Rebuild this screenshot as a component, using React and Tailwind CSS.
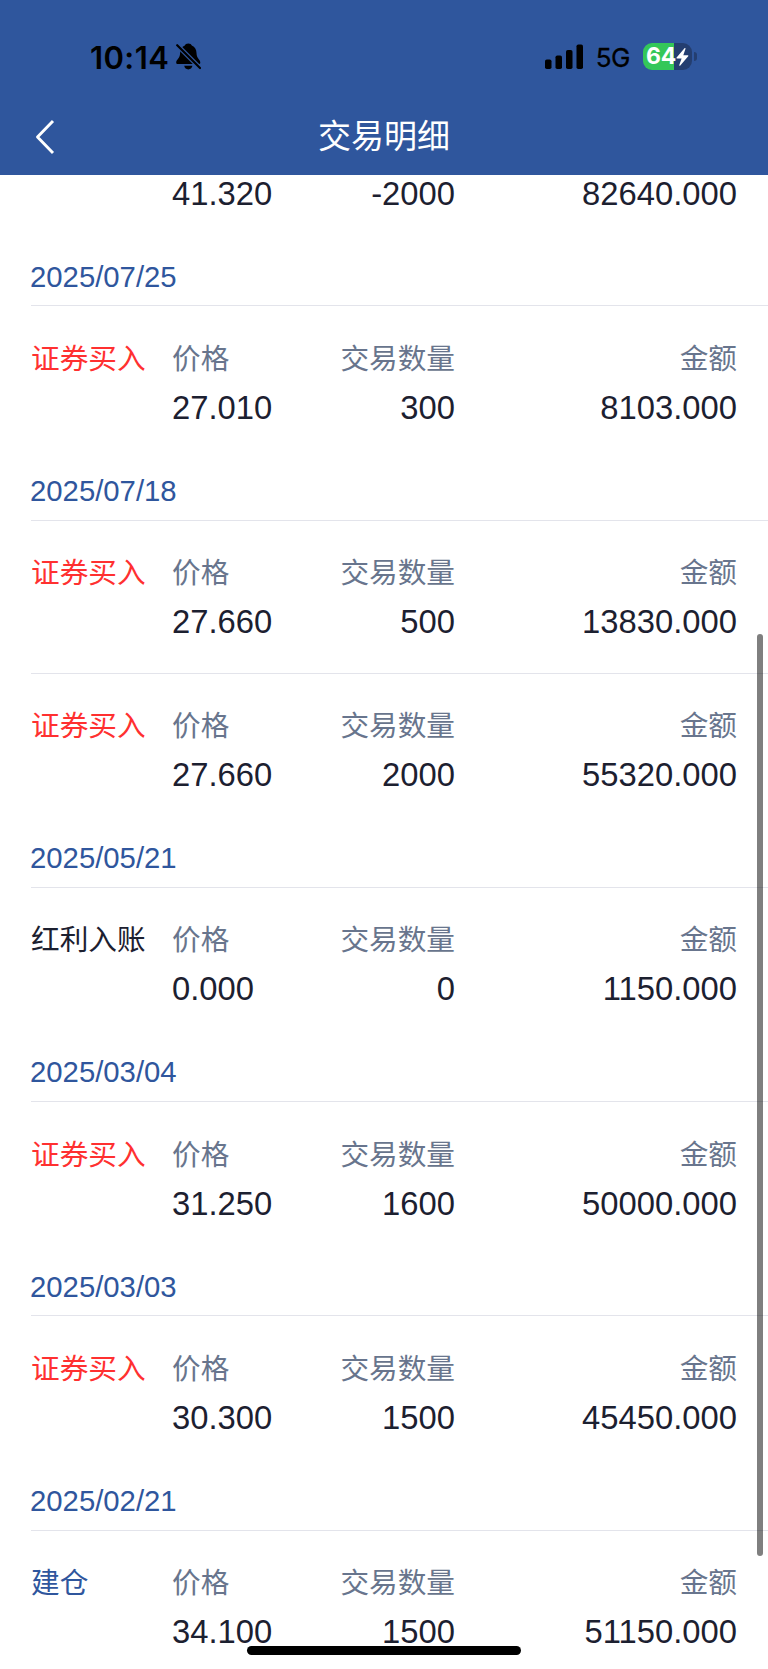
const groups = [
  {
    date: "2025/07/25",
    rows: [{ type: "证券买入", price: "27.010", quantity: "300", amount: "8103.000" }],
  },
  {
    date: "2025/07/18",
    rows: [
      { type: "证券买入", price: "27.660", quantity: "500", amount: "13830.000" },
      { type: "证券买入", price: "27.660", quantity: "2000", amount: "55320.000" },
    ],
  },
  {
    date: "2025/05/21",
    rows: [{ type: "红利入账", price: "0.000", quantity: "0", amount: "1150.000" }],
  },
  {
    date: "2025/03/04",
    rows: [{ type: "证券买入", price: "31.250", quantity: "1600", amount: "50000.000" }],
  },
  {
    date: "2025/03/03",
    rows: [{ type: "证券买入", price: "30.300", quantity: "1500", amount: "45450.000" }],
  },
  {
    date: "2025/02/21",
    rows: [{ type: "建仓", price: "34.100", quantity: "1500", amount: "51150.000" }],
  },
];

const typeColors = {
  证券买入: "text-[#ff3030]",
  建仓: "text-[#2f569d]",
  红利入账: "text-[#1c2030]",
};

function StatusBar() {
  return (
    <div className="flex h-[113px] items-center justify-between pl-[90px] pr-[71px] font-['Inter',sans-serif] text-black">
      <div className="flex items-center gap-[7px]">
        <span className="pt-[2px] text-[31px] font-semibold leading-[40px] tracking-[0.4px]">10:14</span>
        <svg width="25" height="27" viewBox="0 0 25 27">
          <path
            d="M12.300.5c-1.900 0-3 .9-3.500 2C5.600 3.700 4.200 6.500 4.100 10c-.1 5.700-3.900 6.400-3.900 9.700 0 .9.700 1.300 1.600 1.300h21c.9 0 1.500-.4 1.500-1.300 0-3.300-3.700-4-3.800-9.700-.1-3.500-1.500-6.300-4.700-7.500-.5-1.100-1.600-2-3.500-2Z"
            fill="black"
          />
          <path d="M8.200 22.800h8.200c-.4 2.200-2 3.600-4.100 3.600s-3.700-1.400-4.100-3.600Z" fill="black" />
          <path d="M0 1 25 26" stroke="#2f569d" strokeWidth="4.600" />
          <path d="M1.200 2.200 24 25" stroke="black" strokeWidth="2.200" strokeLinecap="round" />
        </svg>
      </div>
      <div className="flex items-center">
        <svg width="39" height="26" viewBox="0 0 39 26">
          <rect x="0" y="15.500" width="6.500" height="9.500" rx="1.800" />
          <rect x="10.500" y="11.500" width="6.500" height="13.500" rx="1.800" />
          <rect x="21" y="6" width="6.500" height="19" rx="1.800" />
          <rect x="31.500" y="0.500" width="6.500" height="24.500" rx="1.800" />
        </svg>
        <span className="ml-[12px] pt-[3px] text-[26px] leading-[36px] tracking-[-0.5px] [-webkit-text-stroke:0.3px]">5G</span>
        <div className="ml-[13px] flex h-[27px] w-[49px] items-center rounded-[9px] bg-linear-to-r from-[#34c759] from-64% to-[#243e70] to-64% pl-[3px]">
          <span className="text-[23px] font-bold leading-[27px] tracking-[-0.3px] text-white">64</span>
          <svg width="13" height="18" viewBox="0 0 13 18">
            <path d="M8.500.3.600 9.600c-.4.500-.2 1 .4 1h4.600L3.300 17c-.2.800.5 1.100 1 .5l7.900-9.300c.4-.5.200-1-.4-1H7.300L9.500.800c.2-.8-.5-1.100-1-.5Z" fill="white" />
          </svg>
        </div>
        <div className="ml-[2px] h-[9px] w-[3px] rounded-r-full bg-[#243e70]" />
      </div>
    </div>
  );
}

function Header() {
  return (
    <header className="h-[175px] bg-[#2f569d]">
      <StatusBar />
      <div className="grid h-[48px] grid-cols-[1fr_auto_1fr] items-center text-white">
        <svg className="ml-[35px]" width="20" height="36" viewBox="0 0 20 36">
          <path d="M18 2 2.500 18 18 34" fill="none" stroke="white" strokeWidth="2.900" strokeLinejoin="round" />
        </svg>
        <h1 className="text-[33px] leading-[48px]">交易明细</h1>
      </div>
    </header>
  );
}

function Cell({ label, value, className = "" }) {
  return (
    <div className={className}>
      <div className="text-[28.670px] leading-[42px] text-[#68758d]">{label}</div>
      <div className="mt-[7px] text-[32.770px] leading-[42px] text-[#1c2030]">{value}</div>
    </div>
  );
}

function Row({ row }) {
  return (
    <div className="ml-[31px] grid h-[153px] grid-cols-[141px_110px_173px_1fr] border-t border-[#e3e4eb] pr-[31px] pt-[31.500px]">
      <div className={`text-[28.670px] leading-[42px] ${typeColors[row.type]}`}>{row.type}</div>
      <Cell label="价格" value={row.price} />
      <Cell label="交易数量" value={row.quantity} className="text-right" />
      <Cell label="金额" value={row.amount} className="text-right" />
    </div>
  );
}

export default function App() {
  return (
    <div className="relative flex h-[1669px] w-[768px] flex-col overflow-hidden bg-white font-['Liberation_Sans','Noto_Sans_CJK_SC',sans-serif]">
      <Header />
      <main className="min-h-0 flex-1 overflow-hidden">
        {/* last line of the entry that is scrolled under the header */}
        <div className="ml-[172px] grid h-[69px] grid-cols-[110px_173px_1fr] pr-[31px] text-[32.770px] leading-[37px] text-[#1c2030]">
          <div>41.320</div>
          <div className="text-right">-2000</div>
          <div className="text-right">82640.000</div>
        </div>
        {groups.map((group) => (
          <section key={group.date}>
            <div className="ml-[30px] h-[61.250px] pt-[12.500px] text-[29.300px] leading-[40px] text-[#2f569d]">
              {group.date}
            </div>
            {group.rows.map((row, i) => (
              <Row key={i} row={row} />
            ))}
          </section>
        ))}
      </main>
      {/* scroll indicator */}
      <div className="absolute right-[5px] top-[634px] h-[922px] w-[6px] rounded-full bg-black/50" />
      {/* home indicator */}
      <div className="absolute left-[247px] top-[1646px] h-[9px] w-[274px] rounded-full bg-black" />
    </div>
  );
}
